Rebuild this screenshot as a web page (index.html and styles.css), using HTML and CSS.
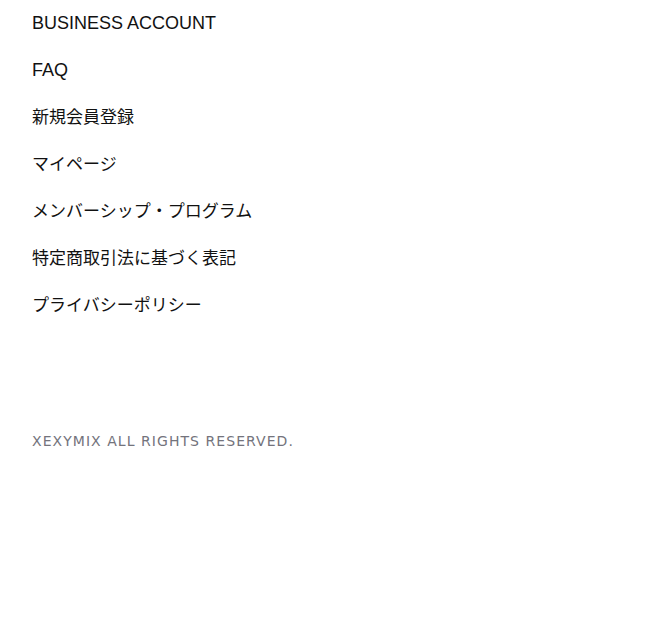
FILE: index.html
```html
<!DOCTYPE html>
<html lang="ja">
<head>
<meta charset="utf-8">
<link rel="stylesheet" href="styles.css">
</head>
<body>
<nav class="menu">
  <ul class="menu-list">
    <li class="menu-item"><a href="#">BUSINESS ACCOUNT</a></li>
    <li class="menu-item"><a href="#">FAQ</a></li>
    <li class="menu-item menu-item-ja"><a href="#">新規会員登録</a></li>
    <li class="menu-item menu-item-ja"><a href="#">マイページ</a></li>
    <li class="menu-item menu-item-ja"><a href="#">メンバーシップ・プログラム</a></li>
    <li class="menu-item menu-item-ja"><a href="#">特定商取引法に基づく表記</a></li>
    <li class="menu-item menu-item-ja"><a href="#">プライバシーポリシー</a></li>
  </ul>
</nav>
<footer class="footer">
  <p class="copyright">XEXYMIX ALL RIGHTS RESERVED.</p>
</footer>
</body>
</html>
```
FILE: styles.css
```css
html, body {
  margin: 0;
  padding: 0;
  background: #fff;
}
body {
  font-family: "Liberation Sans", "Noto Sans CJK JP", sans-serif;
  color: #111;
}
.menu-list {
  list-style: none;
  margin: 0;
  padding: 0 0 0 32px;
}
.menu-item {
  font-size: 18px;
  line-height: 47px;
  height: 47px;
}
.menu-item-ja {
  font-size: 17px;
}
.menu-item a {
  color: #111;
  text-decoration: none;
}
.footer {
  padding: 102px 0 0 32px;
}
.copyright {
  margin: 0;
  font-family: "DejaVu Sans", sans-serif;
  font-size: 14px;
  line-height: 20px;
  color: #73737c;
  letter-spacing: 1.05px;
}
```
